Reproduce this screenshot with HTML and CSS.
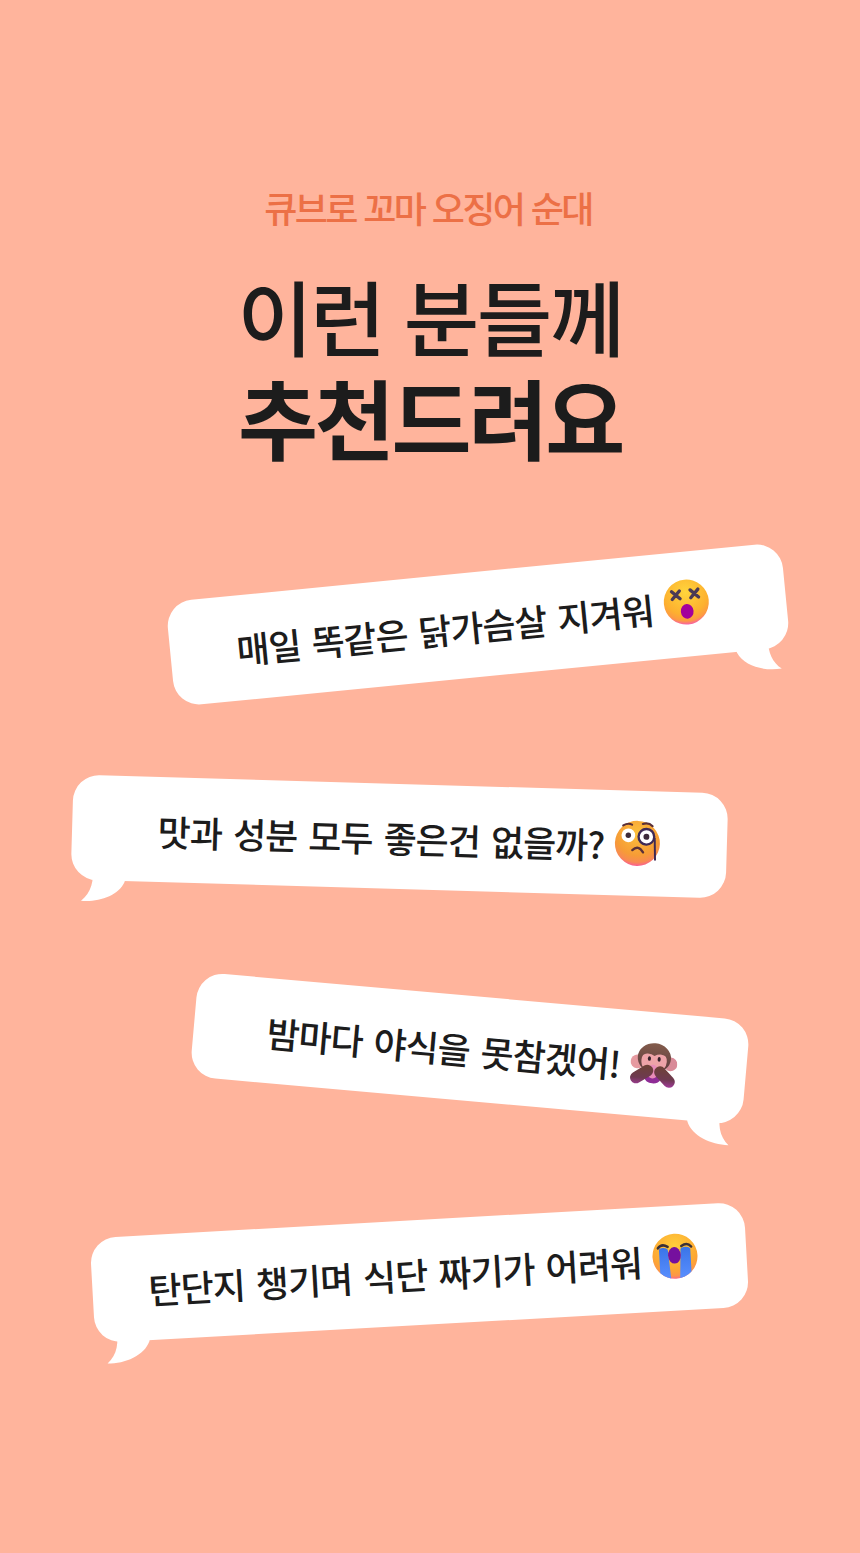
FILE: index.html
```html
<!DOCTYPE html>
<html lang="ko">
<head>
<meta charset="utf-8">
<title>이런 분들께 추천드려요</title>
<link rel="stylesheet" href="styles.css">
</head>
<body>
<main class="page">
  <header class="head">
    <p class="eyebrow">큐브로 꼬마 오징어 순대</p>
    <h1 class="title"><span class="title-light">이런 분들께</span><span class="title-bold">추천드려요</span></h1>
  </header>
  <section class="bubbles">
    <div class="bubble b1">
      <span class="txt">매일 똑같은 닭가슴살 지겨워</span>
      <svg class="emoji" viewBox="0 0 48 48"><defs><radialGradient id="f1" cx=".5" cy=".28" r=".74"><stop offset="0" stop-color="#ffd53c"/><stop offset=".68" stop-color="#fdb02f"/><stop offset=".86" stop-color="#fd9a42"/><stop offset="1" stop-color="#f850c0"/></radialGradient></defs><circle cx="24" cy="24" r="23" fill="url(#f1)"/><path d="M10 12l8 8M18 12l-8 8M29 12l8 8M37 12l-8 8" stroke="#4b3a55" stroke-width="3.4" stroke-linecap="round"/><ellipse cx="24" cy="33.500" rx="6.500" ry="7.500" fill="#a4009c"/></svg>
      <svg class="tail tail-r" viewBox="0 0 50 44"><path d="M0 0H36C33 14 36 27 46 35C28 36 9 29 3 15Z"/></svg>
    </div>
    <div class="bubble b2">
      <span class="txt">맛과 성분 모두 좋은건 없을까?</span>
      <svg class="emoji" viewBox="0 0 48 48"><defs><radialGradient id="f2" cx=".5" cy=".28" r=".75"><stop offset="0" stop-color="#fcc03c"/><stop offset=".65" stop-color="#f69c36"/><stop offset=".85" stop-color="#f88a52"/><stop offset="1" stop-color="#fb50a8"/></radialGradient></defs><circle cx="24" cy="24" r="23" fill="url(#f2)"/><circle cx="14.500" cy="16" r="7" fill="#fff"/><circle cx="14.500" cy="16" r="2.800" fill="#3d2a3a"/><circle cx="33" cy="17" r="8" fill="#fff" stroke="#3f2a55" stroke-width="2.400"/><circle cx="33" cy="17" r="3" fill="#3d2a3a"/><path d="M41.500 18L42.500 41" stroke="#3f2a55" stroke-width="2"/><path d="M19 31q6-6 11 2" fill="none" stroke="#5a3038" stroke-width="2.400" stroke-linecap="round"/><path d="M9 6q5-3 9-1M29 4q6-2 10 2" fill="none" stroke="#5a3038" stroke-width="2.200" stroke-linecap="round"/></svg>
      <svg class="tail tail-l" viewBox="0 0 50 44"><path d="M0 0H36C33 14 36 27 46 35C28 36 9 29 3 15Z"/></svg>
    </div>
    <div class="bubble b3">
      <span class="txt">밤마다 야식을 못참겠어!</span>
      <svg class="emoji" viewBox="0 0 48 48"><defs><linearGradient id="m1" x1="0" y1="0" x2="0" y2="1"><stop offset="0" stop-color="#835c4c"/><stop offset="1" stop-color="#5d3a3e"/></linearGradient><linearGradient id="m2" gradientUnits="userSpaceOnUse" x1="0" y1="26" x2="0" y2="46"><stop offset="0" stop-color="#6e4138"/><stop offset=".6" stop-color="#6e3a50"/><stop offset="1" stop-color="#a03a98"/></linearGradient></defs><circle cx="7" cy="22" r="7" fill="#e69aa0"/><circle cx="41" cy="22" r="7" fill="#d98a98"/><ellipse cx="24" cy="17" rx="17" ry="15" fill="url(#m1)"/><path d="M11 20q0-7 6-7q4 0 7 2q3-2 7-2q6 0 6 7q0 11-13 11q-13 0-13-11z" fill="#eea3a8"/><ellipse cx="19" cy="18" rx="1.600" ry="2.400" fill="#33202a"/><ellipse cx="29" cy="18" rx="1.600" ry="2.400" fill="#33202a"/><ellipse cx="24" cy="38" rx="8" ry="5" fill="#8f2c96"/><ellipse cx="23.500" cy="31" rx="6" ry="7" fill="#e88cb8"/><path d="M7 38.500L18 30.500" stroke="url(#m2)" stroke-width="12" stroke-linecap="round"/><path d="M41 40L31 31" stroke="url(#m2)" stroke-width="12" stroke-linecap="round"/></svg>
      <svg class="tail tail-r" viewBox="0 0 50 44"><path d="M0 0H36C33 14 36 27 46 35C28 36 9 29 3 15Z"/></svg>
    </div>
    <div class="bubble b4">
      <span class="txt">탄단지 챙기며 식단 짜기가 어려워</span>
      <svg class="emoji" viewBox="0 0 48 48"><defs><radialGradient id="f4" cx=".5" cy=".28" r=".74"><stop offset="0" stop-color="#ffcf3a"/><stop offset=".7" stop-color="#fda733"/><stop offset=".88" stop-color="#fc9648"/><stop offset="1" stop-color="#f9609a"/></radialGradient><linearGradient id="t4" x1="0" y1="0" x2="0" y2="1"><stop offset="0" stop-color="#3a74e8"/><stop offset="1" stop-color="#5a90ff"/></linearGradient><clipPath id="c4"><circle cx="24" cy="24" r="23"/></clipPath></defs><circle cx="24" cy="24" r="23" fill="url(#f4)"/><g clip-path="url(#c4)"><path d="M8 17q0-2 4-2t5 2l2 31H8zM30 17q1-2 5-2t5 2v31H28z" fill="url(#t4)"/></g><ellipse cx="23.500" cy="23" rx="6.500" ry="8.500" fill="#75109e"/><path d="M7 15q4-5 10-1M31 14q6-4 10 1" fill="none" stroke="#3a3038" stroke-width="2.600" stroke-linecap="round"/></svg>
      <svg class="tail tail-l" viewBox="0 0 50 44"><path d="M0 0H36C33 14 36 27 46 35C28 36 9 29 3 15Z"/></svg>
    </div>
  </section>
</main>
</body>
</html>
```
FILE: styles.css
```css
* { box-sizing: border-box; }
html, body { margin: 0; padding: 0; }
body { background: #ffb49c; font-family: "Noto Sans CJK KR", "Noto Sans", sans-serif; color: #1c1c1c; }
.page { width: 860px; height: 1553px; overflow: hidden; padding-top: 182px; }
.head { display: flex; flex-direction: column; align-items: center; }
.eyebrow { margin: 0 4px 0 0; font-size: 36px; line-height: 50px; font-weight: 500; letter-spacing: -2.6px; color: #ec7046; }
.title { margin: 31px 0 0; display: flex; flex-direction: column; align-items: center; font-size: 82px; line-height: 104px; }
.title-light { font-weight: 500; letter-spacing: -2.5px; }
.title-bold { font-weight: 700; font-size: 87px; line-height: 98px; letter-spacing: -3.2px; }
.bubbles { display: flex; flex-direction: column; margin-top: 107px; }
.bubble { position: relative; height: 105px; background: #fff; border-radius: 26px; display: flex; align-items: center; justify-content: center; gap: 10px; font-size: 36px; font-weight: 500; letter-spacing: -1px; word-spacing: 2px; }
.txt { line-height: 50px; white-space: nowrap; }
.emoji { width: 47px; height: 47px; flex: none; }
.tail { position: absolute; width: 50px; height: 44px; bottom: -30px; fill: #fff; }
.tail-r { right: 7px; }
.tail-l { left: 7px; transform: scaleX(-1); }
.b1 { width: 618px; margin-left: 169px; padding-right: 10px; transform: rotate(-5.6deg); }
.b1 .emoji { margin-bottom: 5px; }
.b2 { width: 655px; margin-left: 72px; margin-top: 107px; padding-left: 20px; transform: rotate(1.66deg); }
.b3 { width: 554px; margin-left: 193px; margin-top: 107px; padding-left: 4px; transform: rotate(5.07deg); }
.b4 { width: 655px; margin-left: 92px; margin-top: 119px; padding-left: 8px; transform: rotate(-3.2deg); }
.b4 .emoji { margin-bottom: 5px; }
```
